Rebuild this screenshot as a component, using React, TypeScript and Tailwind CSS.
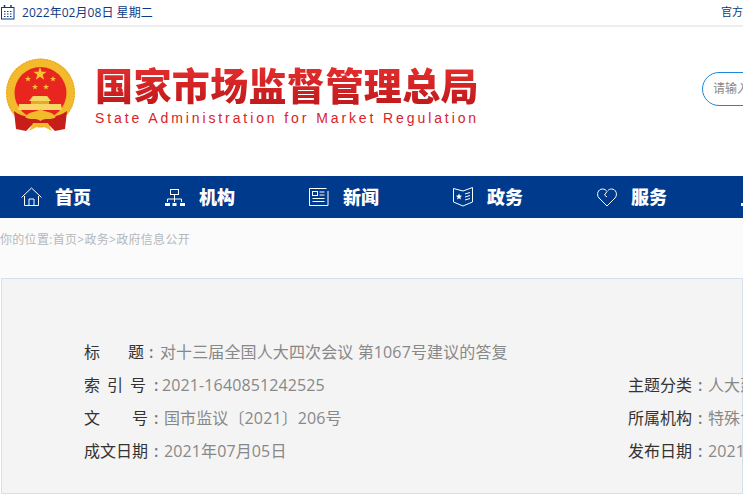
import type { ReactNode } from "react";

const fontStack = { fontFamily: '"Open Sans", "Noto Sans CJK SC", sans-serif' };

function HomeIcon() {
  return (
    <svg width="21" height="20" viewBox="0 0 21 20" fill="none" stroke="white" strokeWidth="1">
      <path d="M0.5 10.5 L10.5 1 L20.5 10.5" />
      <path d="M3.5 9 V18.5 H17.5 V9" />
      <path d="M8 18.5 V12 H13 V18.5" />
    </svg>
  );
}

function OrgIcon() {
  return (
    <svg width="20" height="19" viewBox="0 0 20 19" fill="none" stroke="white" strokeWidth="1">
      <rect x="5.5" y="1.5" width="8" height="5" />
      <path d="M9.5 7 V11 M2.5 14 V11 H16.5 V14 M9.5 11 V14" />
      <rect x="0" y="15" width="5" height="3" fill="white" stroke="none" />
      <rect x="7.5" y="15" width="4" height="3" fill="white" stroke="none" />
      <rect x="15" y="15" width="5" height="3" fill="white" stroke="none" />
    </svg>
  );
}

function NewsIcon() {
  return (
    <svg width="20" height="19" viewBox="0 0 20 19" fill="none" stroke="white" strokeWidth="1">
      <path d="M17.5 0.5 H0.5 V17.5 H19 V3" />
      <rect x="3.5" y="3.5" width="5" height="4" />
      <path d="M10.5 4 H15.5 M10.5 7 H15.5 M3.5 10.5 H15.5 M3.5 13.5 H15.5" />
    </svg>
  );
}

function PolicyIcon() {
  return (
    <svg width="20" height="20" viewBox="0 0 20 20" fill="none" stroke="white" strokeWidth="1">
      <path d="M0.5 1.5 L10 4 L19.5 0.5 V15 L10 19 L0.5 15 Z" />
      <path d="M12 7 L17 5.5 M12 10 L17 8.5 M12 13 L17 11.5" />
      <path
        d="M6 6.5 L6.9 8.6 L9 8.8 L7.4 10.2 L7.9 12.4 L6 11.2 L4.1 12.4 L4.6 10.2 L3 8.8 L5.1 8.6 Z"
        fill="white"
        stroke="none"
      />
    </svg>
  );
}

function HeartIcon() {
  return (
    <svg width="20" height="19" viewBox="0 0 20 19" fill="none" stroke="white" strokeWidth="1">
      <path d="M10 18 L2 10 C-1 6.5 1 1 5.5 1 C7.5 1 9 2 10 3.5 L7.5 7 L10 9" />
      <path d="M10 18 L18 10 C21 6.5 19 1 14.5 1 C13 1 11.8 1.6 10.8 2.6" />
    </svg>
  );
}

function CalendarIcon() {
  return (
    <svg width="14" height="15" viewBox="0 0 14 15" fill="none" stroke="#0b3a87" strokeWidth="1">
      <rect x="0.5" y="2.5" width="12.5" height="11.5" />
      <path d="M3.5 0 V3 M10 0 V3" strokeWidth="1.5" />
      <path
        d="M3 6.5 H4.5 M6 6.5 H7.5 M9 6.5 H10.5 M3 9 H4.5 M6 9 H7.5 M9 9 H10.5 M3 11.5 H4.5 M6 11.5 H7.5 M9 11.5 H10.5"
        strokeWidth="1.2"
      />
    </svg>
  );
}

function star(cx: number, cy: number, r: number) {
  const points: string[] = [];
  for (let i = 0; i < 10; i++) {
    const radius = i % 2 === 0 ? r : r * 0.4;
    const angle = -Math.PI / 2 + (i * Math.PI) / 5;
    points.push(`${cx + radius * Math.cos(angle)},${cy + radius * Math.sin(angle)}`);
  }
  return points.join(" ");
}

function Emblem() {
  return (
    <svg width="72" height="75" viewBox="0 0 72 75">
      <circle cx="35.5" cy="36" r="34.5" fill="#f3bb2c" />
      <circle cx="35.5" cy="36" r="33.8" fill="none" stroke="#e8a322" strokeWidth="1.2" strokeDasharray="1.5 1.5" />
      <circle cx="35.5" cy="36" r="26" fill="#e8261f" />
      <polygon points={star(35, 17, 7)} fill="#f7c531" />
      <polygon points={star(23, 22, 3.2)} fill="#f7c531" />
      <polygon points={star(48, 22, 3.2)} fill="#f7c531" />
      <polygon points={star(30, 30, 3.2)} fill="#f7c531" />
      <polygon points={star(41, 30, 3.2)} fill="#f7c531" />
      <path d="M28 39 H42 L46 44 H24 Z" fill="#f9d766" />
      <rect x="26" y="44" width="18" height="3" fill="#e8a92a" />
      <path d="M14 47 H56 L57 53 H13 Z" fill="#f9d766" />
      <path d="M9 54 C16 60 26 61 35 58 C44 61 54 60 62 54 L60 72 L50 74 L44 68 H27 L21 74 L11 72 Z" fill="#c81e1a" />
      <path d="M20 60 C26 53 30 56 35.5 52 C41 56 45 53 51 60 C45 64 41 60 35.5 64 C30 60 26 64 20 60 Z" fill="#f3bb2c" />
      <path d="M28 66 H43 L47 74 L35.5 68 L24 74 Z" fill="#f3bb2c" />
    </svg>
  );
}

const navItems: { label: string; icon: ReactNode }[] = [
  { label: "首页", icon: <HomeIcon /> },
  { label: "机构", icon: <OrgIcon /> },
  { label: "新闻", icon: <NewsIcon /> },
  { label: "政务", icon: <PolicyIcon /> },
  { label: "服务", icon: <HeartIcon /> },
  { label: "互动", icon: <OrgIcon /> },
];

function Field({ label, value, width }: { label: ReactNode; value: string; width: string }) {
  return (
    <div className="flex h-[33px] items-center whitespace-nowrap text-base">
      <div className={`flex shrink-0 text-[#333] ${width}`}>{label}</div>
      <div className="tracking-[0.12px] text-[#888]">{value}</div>
    </div>
  );
}

function Colon({ gap }: { gap: string }) {
  return <span className={`font-semibold text-[#777] ${gap}`}>:</span>;
}

export default function App() {
  return (
    <div className="h-[495px] w-[743px] overflow-hidden bg-white" style={fontStack}>
      <div className="flex h-[27px] items-center justify-between border-b-2 border-[#eeeeee] pl-px">
        <div className="flex items-center gap-[7px] text-xs tracking-[0.05px] text-[#0b3a87]">
          <CalendarIcon />
          <span>2022年02月08日 星期二</span>
        </div>
        <div className="w-[22px] shrink-0 overflow-hidden whitespace-nowrap text-[11px] text-[#0b3a87]">官方微博</div>
      </div>

      <div className="flex h-[149px] items-center pb-[14px] pl-[5px]">
        <div className="shrink-0">
          <Emblem />
        </div>
        <div className="ml-[18px] w-[384px] shrink-0">
          <div className="whitespace-nowrap bg-gradient-to-b from-[#e9302f] to-[#bd181b] bg-clip-text text-[38px] font-black leading-[46px] tracking-[0.4px] text-transparent">
            国家市场监督管理总局
          </div>
          <div className="mt-px whitespace-nowrap text-sm leading-[18px] tracking-[2.9px] text-[#d8232a]" style={{ fontFamily: '"Liberation Sans", sans-serif' }}>
            State Administration for Market Regulation
          </div>
        </div>
        <div className="mb-[11px] ml-[223px] flex h-[34px] w-[200px] shrink-0 items-center rounded-full border border-[#1e88d8] pl-[10px] text-xs text-[#888]">
          <span className="whitespace-nowrap">请输入关键词</span>
        </div>
      </div>

      <nav className="flex h-[42px] items-center bg-[#003a8c] pl-[21px]">
        {navItems.map((item) => (
          <div key={item.label} className="flex w-[144px] shrink-0 items-center">
            <div className="flex w-[34px] shrink-0">{item.icon}</div>
            <span className="text-lg font-black text-white">{item.label}</span>
          </div>
        ))}
      </nav>

      <div className="h-[60px] bg-[#fbfbfb] pt-[13px] text-xs leading-[17px] tracking-[0.3px] text-[#b4b8bd]">
        你的位置:首页&gt;政务&gt;政府信息公开
      </div>

      <div className="ml-px h-[216px] border border-[#d5e0ef] bg-[#f4f4f4] pl-[82px] pt-[57px]">
        <div className="-mt-px flex w-[800px]">
          <div className="w-[544px] shrink-0">
            <Field
              width="w-[76px]"
              value="对十三届全国人大四次会议 第1067号建议的答复"
              label={
                <>
                  <span className="w-[44px]">标</span>
                  <span>题</span>
                  <Colon gap="ml-[5px]" />
                </>
              }
            />
            <Field
              width="w-[78px]"
              value="2021-1640851242525"
              label={
                <>
                  <span className="flex w-[62px] justify-between">
                    <span>索</span>
                    <span>引</span>
                    <span>号</span>
                  </span>
                  <Colon gap="ml-[8px]" />
                </>
              }
            />
            <Field
              width="w-[80px]"
              value="国市监议〔2021〕206号"
              label={
                <>
                  <span className="w-[48px]">文</span>
                  <span>号</span>
                  <Colon gap="ml-[6px]" />
                </>
              }
            />
            <Field
              width="w-[80px]"
              value="2021年07月05日"
              label={
                <>
                  <span>成文日期</span>
                  <Colon gap="ml-[6px]" />
                </>
              }
            />
          </div>
          <div className="mt-[33px] shrink-0">
            <Field
              width="w-[80px]"
              value="人大建议"
              label={
                <>
                  <span>主题分类</span>
                  <Colon gap="ml-[6px]" />
                </>
              }
            />
            <Field
              width="w-[80px]"
              value="特殊食品安全监督管理司"
              label={
                <>
                  <span>所属机构</span>
                  <Colon gap="ml-[6px]" />
                </>
              }
            />
            <Field
              width="w-[80px]"
              value="2021年07月05日"
              label={
                <>
                  <span>发布日期</span>
                  <Colon gap="ml-[6px]" />
                </>
              }
            />
          </div>
        </div>
      </div>
    </div>
  );
}
